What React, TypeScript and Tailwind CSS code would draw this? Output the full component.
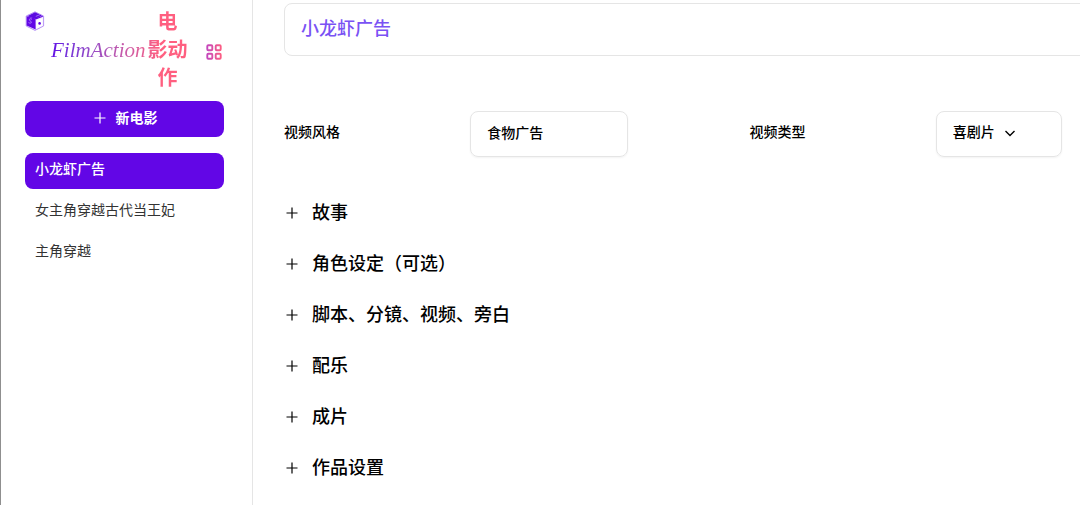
import { useState } from 'react';

const movies = ['小龙虾广告', '女主角穿越古代当王妃', '主角穿越'];

const sections = [
  '故事',
  '角色设定（可选）',
  '脚本、分镜、视频、旁白',
  '配乐',
  '成片',
  '作品设置',
];

function CubeLogo() {
  return (
    <svg viewBox="0 0 20 20" className="size-5" fill="none" aria-hidden="true">
      <path d="M10 .8 18.6 5v10L10 19.4 1.2 15V5Z" fill="#f6f0ff" stroke="#b794f6" strokeWidth="1" strokeLinejoin="round" />
      <path d="M10 1.2 17 4.6 10.6 8 2.2 5.2Z" fill="#5b0be0" />
      <path d="M1.6 5.2 10.6 7.4V18.6L1.6 14.6Z" fill="#6206e6" />
      <path d="M7 8.2c-1.6-.8-3-.4-2.6.9.3 1 2 1 2 2.2 0 1.1-1.6 1-2.9.3" stroke="#b08af8" strokeWidth=".9" />
      <path d="M10.8 5.4 15.6 3.4" stroke="#b794f6" strokeWidth=".7" />
      <path d="M11.4 9.6 17.4 7.4v7.2l-6 3Z" fill="#fff" />
      <path d="M10.6 7.9 17.8 5.2" stroke="#6206e6" strokeWidth="1.2" />
      <circle cx="14.6" cy="12.4" r="1.3" fill="#6206e6" />
    </svg>
  );
}

function GridIcon() {
  return (
    <svg viewBox="0 0 16 16" className="size-4" fill="none" stroke="url(#gridFade)" strokeWidth="1.9">
      <defs>
        <linearGradient id="gridFade" gradientUnits="userSpaceOnUse" x1="0" y1="0" x2="16" y2="0">
          <stop offset="0" stopColor="#c044c0" />
          <stop offset="1" stopColor="#ff5f80" />
        </linearGradient>
      </defs>
      <rect x="1.3" y="1.3" width="5" height="5" rx="1" />
      <rect x="9.7" y="1.3" width="5" height="5" rx="1" />
      <rect x="1.3" y="9.7" width="5" height="5" rx="1" />
      <rect x="9.7" y="9.7" width="5" height="5" rx="1" />
    </svg>
  );
}

function PlusIcon() {
  return (
    <svg viewBox="0 0 16 16" className="size-4 shrink-0" fill="none" stroke="currentColor" strokeWidth="1.2" aria-hidden="true">
      <path d="M8 2.5v11M2.5 8h11" />
    </svg>
  );
}

export default function App() {
  const [current, setCurrent] = useState(0);
  const [title, setTitle] = useState(movies[0]);
  const [style, setStyle] = useState('食物广告');

  return (
    <div className="flex h-screen overflow-hidden bg-white text-black font-['Inter','Noto_Sans_CJK_SC',sans-serif]">
      <aside className="w-[253px] shrink-0 border-l border-l-[#8f8f8f] border-r border-r-[#e5e5e5] pl-6 pr-7">
        <header className="flex pt-2">
          <div className="pt-[3px]">
            <CubeLogo />
          </div>
          <div className="flex flex-1 items-center justify-between pl-1.5 pr-0.5">
            <h1 className="flex items-center gap-0.5 bg-linear-to-r from-[#6206e6] to-[#ff5f80] to-80% bg-clip-text text-xl/7 text-transparent">
              <span className="font-['Liberation_Serif',serif] text-[21px] italic">FilmAction</span>
              <span className="w-10 text-center font-bold">
                电
                <br />
                影动
                <br />作
              </span>
            </h1>
            <button type="button" aria-label="菜单" className="pt-1">
              <GridIcon />
            </button>
          </div>
        </header>

        <button
          type="button"
          className="mt-[9px] flex h-9 w-full items-center justify-center gap-2 rounded-lg bg-[#6206e6] pb-0.5 text-sm font-bold text-white"
        >
          <PlusIcon />
          新电影
        </button>

        <nav className="mt-4 flex flex-col gap-[5px]">
          {movies.map((movie, i) => (
            <button
              key={movie}
              type="button"
              onClick={() => {
                setCurrent(i);
                setTitle(movie);
              }}
              className={`h-9 rounded-lg px-2.5 pb-1 text-left text-sm ${
                i === current ? 'bg-[#6206e6] font-medium text-white' : 'text-[#333]'
              }`}
            >
              {movie}
            </button>
          ))}
        </nav>
      </aside>

      <main className="flex-1 overflow-hidden pl-[31px] pt-[3px]">
        <div className="min-w-[931px]">
          <input
            aria-label="标题"
            value={title}
            onChange={(e) => setTitle(e.target.value)}
            className="h-[53px] w-full rounded-lg border border-[#e5e5e5] px-4 pb-1.5 text-lg font-medium text-[#7a52f4]"
          />

          <div className="mt-[55px] grid grid-cols-2">
            <div className="grid grid-cols-5 items-center">
              <label htmlFor="style" className="col-span-2 pb-1 text-sm font-medium">
                视频风格
              </label>
              <input
                id="style"
                value={style}
                onChange={(e) => setStyle(e.target.value)}
                className="h-[46px] w-[158px] rounded-lg border border-[#e5e5e5] px-4 pb-1 text-sm font-medium shadow-xs"
              />
            </div>
            <div className="grid grid-cols-5 items-center">
              <label htmlFor="type" className="col-span-2 pb-1 text-sm font-medium">
                视频类型
              </label>
              <div className="relative w-[126px]">
                <select
                  id="type"
                  className="h-[46px] w-full appearance-none rounded-lg border border-[#e5e5e5] px-4 pb-1 text-sm font-medium shadow-xs"
                >
                  <option>喜剧片</option>
                </select>
                <svg
                  viewBox="0 0 12 12"
                  className="pointer-events-none absolute left-[68px] top-4 size-3"
                  fill="none"
                  stroke="currentColor"
                  strokeWidth="1.4"
                >
                  <path d="M1.5 4 6 8.5 10.5 4" />
                </svg>
              </div>
            </div>
          </div>

          <div className="mt-[30px]">
            {sections.map((section) => (
              <button
                key={section}
                type="button"
                className="flex h-[51px] w-full items-center gap-3 text-left text-lg font-medium"
              >
                <PlusIcon />
                {section}
              </button>
            ))}
          </div>
        </div>
      </main>
    </div>
  );
}
